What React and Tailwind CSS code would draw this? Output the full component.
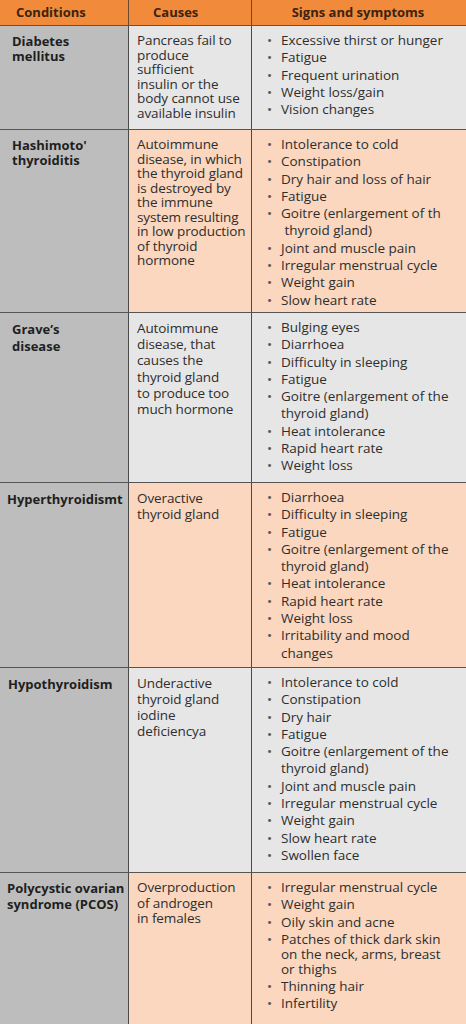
import React from 'react';

const rows = [
  {
    condition: ['Diabetes', 'mellitus'],
    causes: ['Pancreas fail to', 'produce', 'sufficient', 'insulin or the', 'body cannot use', 'available insulin'],
    signs: [['Excessive thirst or hunger'], ['Fatigue'], ['Frequent urination'], ['Weight loss/gain'], ['Vision changes']],
    tone: 'gray',
    h: 'h-[104px]',
    cl: 'leading-[14.5px]',
    dl: 'leading-[15px] pl-[12px]',
  },
  {
    condition: ["Hashimoto'", 'thyroiditis'],
    causes: ['Autoimmune', 'disease, in which', 'the thyroid gland', 'is destroyed by', 'the immune', 'system resulting', 'in low production', 'of thyroid', 'hormone'],
    signs: [
      ['Intolerance to cold'],
      ['Constipation'],
      ['Dry hair and loss of hair'],
      ['Fatigue'],
      ['Goitre (enlargement of th', ' thyroid gland)'],
      ['Joint and muscle pain'],
      ['Irregular menstrual cycle'],
      ['Weight gain'],
      ['Slow heart rate'],
    ],
    tone: 'peach',
    h: 'h-[183px]',
    cl: 'leading-[14.5px]',
    dl: 'leading-[15px] pl-[12px]',
  },
  {
    condition: ['Grave’s', 'disease'],
    causes: ['Autoimmune', 'disease, that', 'causes the', 'thyroid gland', 'to produce too', 'much hormone'],
    signs: [
      ['Bulging eyes'],
      ['Diarrhoea'],
      ['Difficulty in sleeping'],
      ['Fatigue'],
      ['Goitre (enlargement of the', 'thyroid gland)'],
      ['Heat intolerance'],
      ['Rapid heart rate'],
      ['Weight loss'],
    ],
    tone: 'gray',
    h: 'h-[170px]',
    cl: 'leading-[16.2px]',
    dl: 'leading-[16.5px] pl-[12px]',
  },
  {
    condition: ['Hyperthyroidismt'],
    causes: ['Overactive', 'thyroid gland'],
    signs: [
      ['Diarrhoea'],
      ['Difficulty in sleeping'],
      ['Fatigue'],
      ['Goitre (enlargement of the', 'thyroid gland)'],
      ['Heat intolerance'],
      ['Rapid heart rate'],
      ['Weight loss'],
      ['Irritability and mood', 'changes'],
    ],
    tone: 'peach',
    h: 'h-[185px]',
    cl: 'leading-[16px]',
    dl: 'leading-[16px] pl-[7px]',
  },
  {
    condition: ['Hypothyroidism'],
    causes: ['Underactive', 'thyroid gland', 'iodine', 'deficiencya'],
    signs: [
      ['Intolerance to cold'],
      ['Constipation'],
      ['Dry hair'],
      ['Fatigue'],
      ['Goitre (enlargement of the', 'thyroid gland)'],
      ['Joint and muscle pain'],
      ['Irregular menstrual cycle'],
      ['Weight gain'],
      ['Slow heart rate'],
      ['Swollen face'],
    ],
    tone: 'gray',
    h: 'h-[205px]',
    cl: 'leading-[16px]',
    dl: 'leading-[16px] pl-[8px]',
  },
  {
    condition: ['Polycystic ovarian', 'syndrome (PCOS)'],
    causes: ['Overproduction', 'of androgen', 'in females'],
    signs: [
      ['Irregular menstrual cycle'],
      ['Weight gain'],
      ['Oily skin and acne'],
      ['Patches of thick dark skin', 'on the neck, arms, breast', 'or thighs'],
      ['Thinning hair'],
      ['Infertility'],
    ],
    tone: 'peach',
    h: 'h-[160px]',
    cl: 'leading-[15.5px]',
    dl: 'leading-[15.5px] pl-[7px]',
    tight: true,
  },
];

export default function App() {
  return (
    <div
      className="w-[466px] h-[1024px] overflow-hidden bg-[#bdbdbd] text-[13.5px] leading-[17.3px] text-[#2e2e2e]"
      style={{ fontFamily: '"Open Sans", "Liberation Sans", sans-serif' }}
    >
      <div className="grid grid-cols-[128px_1px_122px_1px_214px] h-[25px] bg-[#f28a3b] text-[13px] font-bold text-[#3b2412] items-center">
        <div className="pl-[16px]">Conditions</div>
        <div className="h-full bg-[#6b4a30]" />
        <div className="pl-[24px]">Causes</div>
        <div className="h-full bg-[#6b4a30]" />
        <div className="text-center pr-[2px]">Signs and symptoms</div>
      </div>
      {rows.map((r, i) => {
        const bg = r.tone === 'peach' ? 'bg-[#fad7be]' : 'bg-[#e6e6e6]';
        return (
          <div key={i} className={`border-t border-[#555] ${r.h} grid grid-cols-[128px_1px_122px_1px_214px]`}>
            <div className={`bg-[#bdbdbd] pt-[8px] text-[13px] font-bold text-[#1f1f1f] whitespace-pre ${r.dl}`}>
              {r.condition.join('\n')}
            </div>
            <div className="bg-[#4a4a4a]" />
            <div className={`${bg} pl-[8px] pt-[7px] tracking-[-0.1px] whitespace-pre overflow-hidden ${r.cl}`}>
              {r.causes.join('\n')}
            </div>
            <div className="bg-[#4a4a4a]" />
            <div className={`${bg} pl-[15px] pt-[6px]`}>
              {r.signs.map((s, j) => (
                <div key={j} className={`flex ${r.tight && s.length > 2 ? 'leading-[15px] my-[1px]' : ''}`}>
                  <span className="w-[14px] shrink-0 text-[#555]">•</span>
                  <div className="whitespace-pre">{s.join('\n')}</div>
                </div>
              ))}
            </div>
          </div>
        );
      })}
    </div>
  );
}
